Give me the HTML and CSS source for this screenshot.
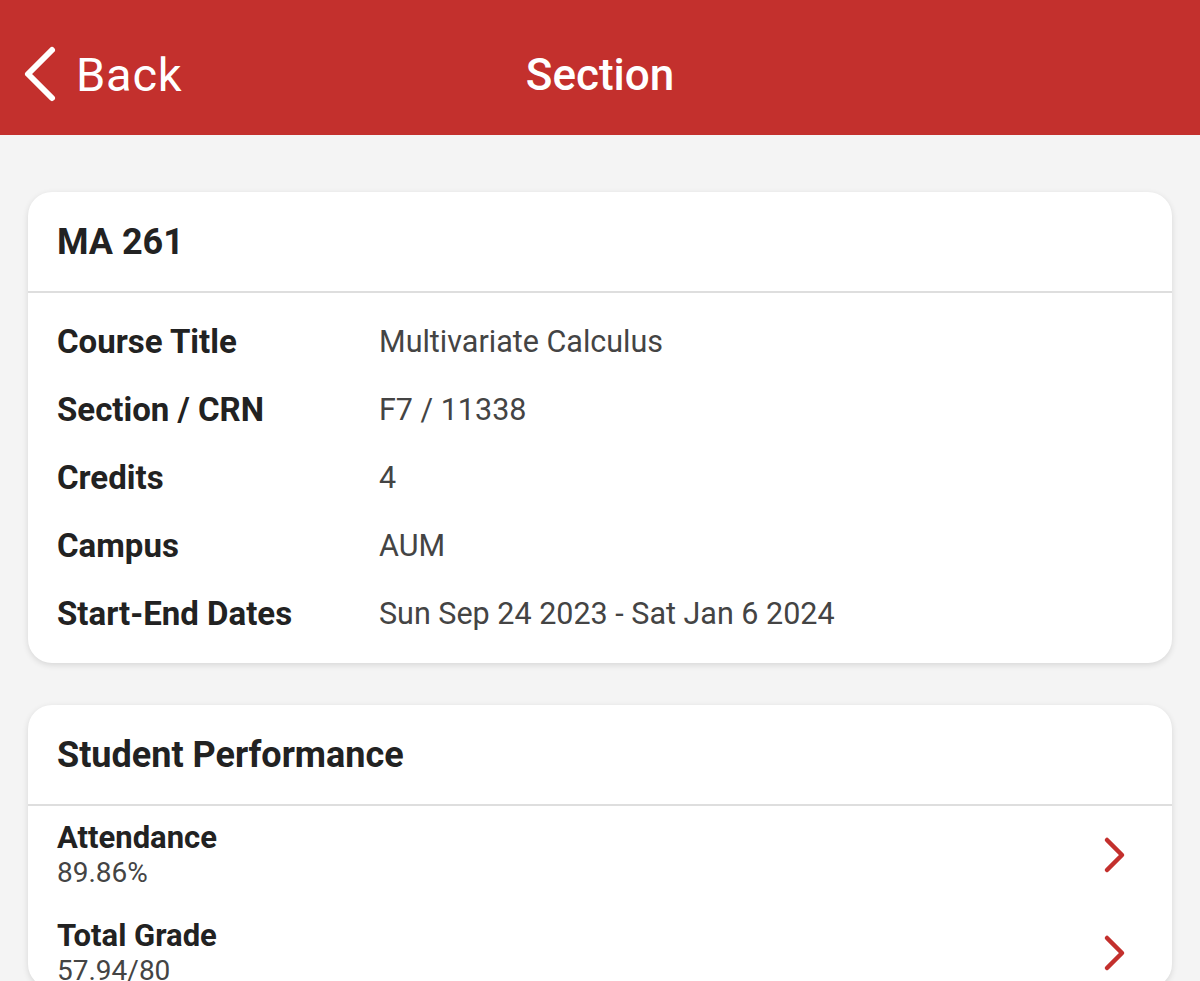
FILE: index.html
```html
<!DOCTYPE html>
<html>
<head>
<meta charset="utf-8">
<link rel="stylesheet" href="styles.css">
</head>
<body>
<header class="topbar">
  <div class="back">
    <svg class="back-icon" width="40" height="60" viewBox="0 0 40 60"><path d="M32 5 L8 29 L32 53" fill="none" stroke="#fff" stroke-width="6" stroke-linecap="round" stroke-linejoin="round"/></svg>
    <span class="back-text">Back</span>
  </div>
  <h1 class="title">Section</h1>
</header>
<main class="content">
  <section class="card">
    <div class="card-head">MA 261</div>
    <div class="card-body info">
      <div class="row"><div class="label">Course Title</div><div class="value">Multivariate Calculus</div></div>
      <div class="row"><div class="label">Section / CRN</div><div class="value">F7 / 11338</div></div>
      <div class="row"><div class="label">Credits</div><div class="value">4</div></div>
      <div class="row"><div class="label">Campus</div><div class="value">AUM</div></div>
      <div class="row"><div class="label">Start-End Dates</div><div class="value">Sun Sep 24 2023 - Sat Jan 6 2024</div></div>
    </div>
  </section>
  <section class="card">
    <div class="card-head">Student Performance</div>
    <div class="card-body perf">
      <div class="perf-row">
        <div><div class="perf-label">Attendance</div><div class="perf-value">89.86%</div></div>
        <svg class="chev" width="26" height="38" viewBox="0 0 26 38"><path d="M5 4 L20 19 L5 34" fill="none" stroke="#c3302d" stroke-width="4.5" stroke-linecap="round" stroke-linejoin="round"/></svg>
      </div>
      <div class="perf-row">
        <div><div class="perf-label">Total Grade</div><div class="perf-value">57.94/80</div></div>
        <svg class="chev" width="26" height="38" viewBox="0 0 26 38"><path d="M5 4 L20 19 L5 34" fill="none" stroke="#c3302d" stroke-width="4.5" stroke-linecap="round" stroke-linejoin="round"/></svg>
      </div>
    </div>
  </section>
</main>
</body>
</html>
```
FILE: styles.css
```css
html, body {
  margin: 0;
  padding: 0;
}
body {
  background: #f4f4f4;
  font-family: Roboto, "Liberation Sans", sans-serif;
  color: #222;
  overflow: hidden;
  height: 981px;
}
.topbar {
  height: 135px;
  background: #c3302d;
  display: flex;
  align-items: center;
  position: relative;
  box-sizing: border-box;
  padding-top: 14px;
}
.back {
  display: flex;
  align-items: center;
  padding-left: 20px;
  gap: 16px;
  color: #fff;
}
.back-icon {
  display: block;
}
.back-text {
  font-size: 47px;
  font-weight: 400;
  letter-spacing: 0.8px;
}
.title {
  position: absolute;
  left: 0;
  right: 0;
  top: 14px;
  bottom: 0;
  margin: 0;
  display: flex;
  align-items: center;
  justify-content: center;
  color: #fff;
  font-size: 44px;
  font-weight: 500;
  pointer-events: none;
}
.content {
  padding: 57px 28px 0;
  display: flex;
  flex-direction: column;
  gap: 42px;
}
.card {
  background: #fff;
  border-radius: 24px;
  box-shadow: 0 2px 6px rgba(0,0,0,0.12);
  overflow: hidden;
}
.card-head {
  height: 99px;
  display: flex;
  align-items: center;
  padding-left: 29px;
  font-size: 36px;
  font-weight: 700;
  color: #222;
  border-bottom: 2px solid #dedede;
}
.info {
  padding: 14px 29px 16px;
  display: flex;
  flex-direction: column;
}
.row {
  display: flex;
  align-items: center;
  height: 68px;
}
.label {
  width: 322px;
  font-size: 33px;
  font-weight: 700;
  color: #222;
}
.value {
  font-size: 30.5px;
  color: #444;
}
.perf {
  padding: 14px 44px 0 29px;
  display: flex;
  flex-direction: column;
  gap: 28px;
}
.perf-row {
  display: flex;
  align-items: center;
  justify-content: space-between;
}
.perf-label {
  font-size: 31px;
  font-weight: 700;
  color: #222;
  line-height: 36px;
}
.perf-value {
  font-size: 28px;
  color: #444;
  line-height: 34px;
}
.chev {
  display: block;
}
```
